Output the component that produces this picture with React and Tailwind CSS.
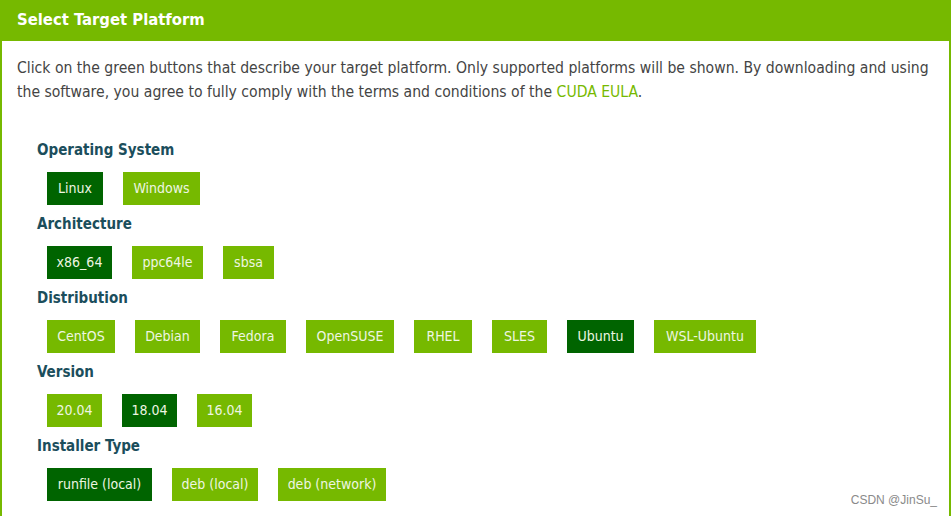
import React from 'react';

const sections = [
  {
    label: 'Operating System',
    options: [
      { name: 'Linux', w: 'w-[56px]', active: true },
      { name: 'Windows', w: 'w-[77px]' },
    ],
  },
  {
    label: 'Architecture',
    options: [
      { name: 'x86_64', w: 'w-[65px]', active: true },
      { name: 'ppc64le', w: 'w-[71px]' },
      { name: 'sbsa', w: 'w-[51px]' },
    ],
  },
  {
    label: 'Distribution',
    options: [
      { name: 'CentOS', w: 'w-[68px]' },
      { name: 'Debian', w: 'w-[65px]' },
      { name: 'Fedora', w: 'w-[66px]' },
      { name: 'OpenSUSE', w: 'w-[88px]' },
      { name: 'RHEL', w: 'w-[58px]' },
      { name: 'SLES', w: 'w-[55px]' },
      { name: 'Ubuntu', w: 'w-[67px]', active: true },
      { name: 'WSL-Ubuntu', w: 'w-[102px]' },
    ],
  },
  {
    label: 'Version',
    options: [
      { name: '20.04', w: 'w-[55px]' },
      { name: '18.04', w: 'w-[55px]', active: true },
      { name: '16.04', w: 'w-[55px]' },
    ],
  },
  {
    label: 'Installer Type',
    options: [
      { name: 'runfile (local)', w: 'w-[105px]', active: true },
      { name: 'deb (local)', w: 'w-[86px]' },
      { name: 'deb (network)', w: 'w-[108px]' },
    ],
  },
];

function OptionButton({ name, w, active }) {
  return (
    <button
      className={
        'h-[33px] flex items-center justify-center text-[14px] text-[#eef6e2] whitespace-nowrap ' +
        w +
        (active ? ' bg-[#006400]' : ' bg-[#76b900]')
      }
    >
      {name}
    </button>
  );
}

export default function App() {
  return (
    <div
      className="relative w-[951px] h-[516px] bg-white overflow-hidden"
      style={{ fontFamily: '"DejaVu Sans Condensed", "Liberation Sans", sans-serif' }}
    >
      <div className="h-full border-l-2 border-r-2 border-[#76b900] flex flex-col">
        {/* Header */}
        <div className="h-[41px] -mx-[2px] bg-[#76b900] flex items-center pl-[17px]">
          <h2 className="text-white text-[16.5px] font-semibold">Select Target Platform</h2>
        </div>

        {/* Intro */}
        <p className="mt-[15px] pl-[15px] pr-[16px] text-[15.6px] leading-[24px] text-[#444444]">
          Click on the green buttons that describe your target platform. Only supported platforms will be shown. By downloading and using
          the software, you agree to fully comply with the terms and conditions of the{' '}
          <span className="text-[#76b900]">CUDA EULA</span>.
        </p>

        {/* Selectors */}
        <div className="mt-[35px] pl-[35px] flex flex-col gap-[8px]">
          {sections.map((s) => (
            <div key={s.label} className="flex flex-col">
              <div className="h-[22px] leading-[22px] text-[15px] font-semibold text-[#1b4e5c]">{s.label}</div>
              <div className="mt-[11px] pl-[10px] flex gap-[20px]">
                {s.options.map((o) => (
                  <OptionButton key={o.name} {...o} />
                ))}
              </div>
            </div>
          ))}
        </div>
      </div>

      <span className="absolute right-[14px] bottom-[7px] text-[12px] text-[#8a8a8a]" style={{ fontFamily: '"Liberation Sans", sans-serif' }}>
        CSDN @JinSu_
      </span>
    </div>
  );
}
